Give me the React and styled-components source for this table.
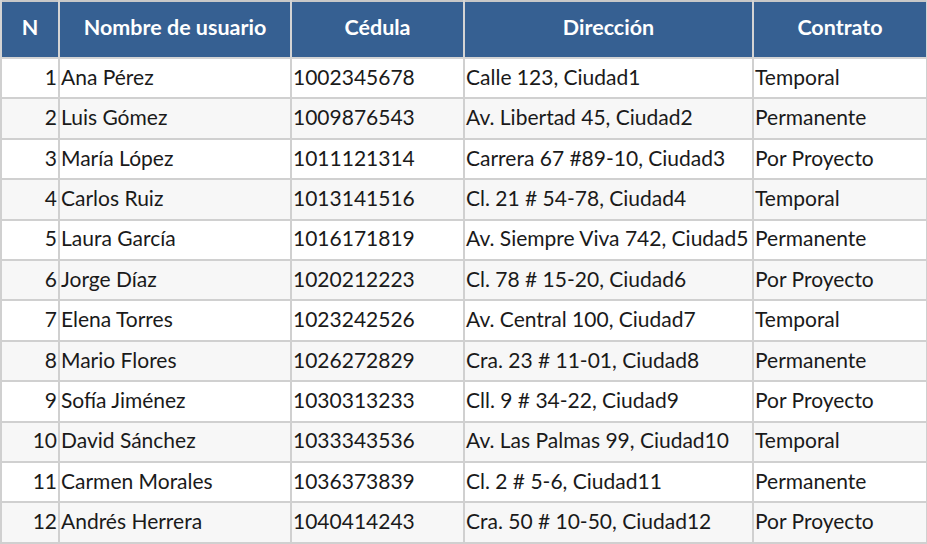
import React from "react";
import styled, { createGlobalStyle } from "styled-components";

const GlobalStyle = createGlobalStyle`
  body {
    margin: 0;
    background: #ffffff;
    font-family: Lato, "Liberation Sans", sans-serif;
  }
`;

const Table = styled.table`
  border-collapse: collapse;
  width: 926px;
  table-layout: fixed;
  font-size: 21px;
  color: #1a1a1a;
  border: 2px solid #c8c8c8;
`;

const HeadCell = styled.th`
  background: #366092;
  color: #ffffff;
  font-size: 21.5px;
  font-weight: 700;
  text-align: center;
  line-height: 27px;
  padding: 12px 0 16px;
  border: 2px solid #d4d4d4;
  border-top: 1px solid #d4d4d4;
`;

const Row = styled.tr`
  background: ${(p) => (p.$alt ? "#f7f7f7" : "#ffffff")};
`;

const Cell = styled.td`
  padding: 4.9px 1px 8.3px;
  line-height: 25.2px;
  text-align: ${(p) => (p.$right ? "right" : "left")};
  border: 2px solid #d0d0d0;
  white-space: nowrap;
  overflow: hidden;
`;

const users = [
  ["Ana Pérez", "1002345678", "Calle 123, Ciudad1", "Temporal"],
  ["Luis Gómez", "1009876543", "Av. Libertad 45, Ciudad2", "Permanente"],
  ["María López", "1011121314", "Carrera 67 #89-10, Ciudad3", "Por Proyecto"],
  ["Carlos Ruiz", "1013141516", "Cl. 21 # 54-78, Ciudad4", "Temporal"],
  ["Laura García", "1016171819", "Av. Siempre Viva 742, Ciudad5", "Permanente"],
  ["Jorge Díaz", "1020212223", "Cl. 78 # 15-20, Ciudad6", "Por Proyecto"],
  ["Elena Torres", "1023242526", "Av. Central 100, Ciudad7", "Temporal"],
  ["Mario Flores", "1026272829", "Cra. 23 # 11-01, Ciudad8", "Permanente"],
  ["Sofía Jiménez", "1030313233", "Cll. 9 # 34-22, Ciudad9", "Por Proyecto"],
  ["David Sánchez", "1033343536", "Av. Las Palmas 99, Ciudad10", "Temporal"],
  ["Carmen Morales", "1036373839", "Cl. 2 # 5-6, Ciudad11", "Permanente"],
  ["Andrés Herrera", "1040414243", "Cra. 50 # 10-50, Ciudad12", "Por Proyecto"],
];

const columns = [
  { title: "N", width: 58 },
  { title: "Nombre de usuario", width: 232 },
  { title: "Cédula", width: 173 },
  { title: "Dirección", width: 289 },
  { title: "Contrato", width: 174 },
];

export default function App() {
  return (
    <>
      <GlobalStyle />
      <Table>
        <colgroup>
          {columns.map((c) => (
            <col key={c.title} style={{ width: c.width }} />
          ))}
        </colgroup>
        <thead>
          <tr>
            {columns.map((c) => (
              <HeadCell key={c.title}>{c.title}</HeadCell>
            ))}
          </tr>
        </thead>
        <tbody>
          {users.map((u, i) => (
            <Row key={u[1]} $alt={i % 2 === 1}>
              <Cell $right>{i + 1}</Cell>
              <Cell>{u[0]}</Cell>
              <Cell>{u[1]}</Cell>
              <Cell>{u[2]}</Cell>
              <Cell>{u[3]}</Cell>
            </Row>
          ))}
        </tbody>
      </Table>
    </>
  );
}
